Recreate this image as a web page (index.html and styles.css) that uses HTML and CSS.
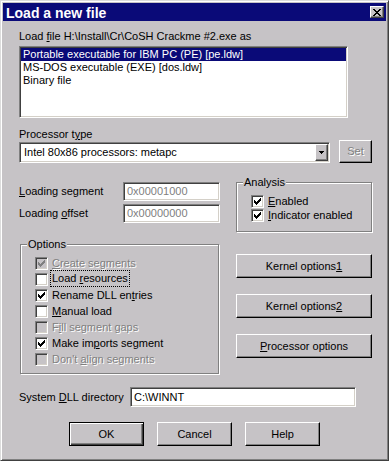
FILE: index.html
```html
<!DOCTYPE html>
<html>
<head>
<meta charset="utf-8">
<title>Load a new file</title>
<link rel="stylesheet" href="styles.css">
</head>
<body>
<div class="window">
  <div class="titlebar">
    <span class="title">Load a new file</span>
    <span class="close"><svg width="8" height="7" viewBox="0 0 8 7"><path d="M0 0h2v1h-2zM6 0h2v1h-2zM1 1h2v1h-2zM5 1h2v1h-2zM2 2h4v1h-4zM3 3h2v1h-2zM2 4h4v1h-4zM1 5h2v1h-2zM5 5h2v1h-2zM0 6h2v1h-2zM6 6h2v1h-2z" fill="#000"/></svg></span>
  </div>
  <div class="client">
    <div class="top-label">Load <u>f</u>ile H:\Install\Cr\CoSH Crackme #2.exe as</div>
    <div class="listbox">
      <div class="item sel">Portable executable for IBM PC (PE) [pe.ldw]</div>
      <div class="item">MS-DOS executable (EXE) [dos.ldw]</div>
      <div class="item">Binary file</div>
    </div>
    <div class="proc-label">Processor t<u>y</u>pe</div>
    <div class="proc-row">
      <div class="combo">
        <span class="combo-text">Intel 80x86 processors: metapc</span>
        <span class="drop"><svg width="5" height="3" viewBox="0 0 5 3"><path d="M0 0h5v1h-5zM1 1h3v1h-3zM2 2h1v1h-1z" fill="#000"/></svg></span>
      </div>
      <div class="btn set disabled">Set</div>
    </div>
    <div class="mid-row">
      <div class="loading">
        <div class="field-row"><span><u>L</u>oading segment</span><div class="edit small">0x00001000</div></div>
        <div class="field-row"><span>Loading <u>o</u>ffset</span><div class="edit small">0x00000000</div></div>
      </div>
      <fieldset class="group analysis">
        <legend>Analysis</legend>
        <div class="chk"><span class="cb"><svg width="13" height="13" viewBox="0 0 13 13"><path class="tick" d="M9 3h1v1h-1zM8 4h2v1h-2zM3 5h1v1h-1zM7 5h3v1h-3zM3 6h2v1h-2zM6 6h3v1h-3zM3 7h5v1h-5zM4 8h3v1h-3zM5 9h1v1h-1z"/></svg></span><span class="lbl"><u>E</u>nabled</span></div>
        <div class="chk"><span class="cb"><svg width="13" height="13" viewBox="0 0 13 13"><path class="tick" d="M9 3h1v1h-1zM8 4h2v1h-2zM3 5h1v1h-1zM7 5h3v1h-3zM3 6h2v1h-2zM6 6h3v1h-3zM3 7h5v1h-5zM4 8h3v1h-3zM5 9h1v1h-1z"/></svg></span><span class="lbl"><u>I</u>ndicator enabled</span></div>
      </fieldset>
    </div>
    <div class="opt-row">
      <fieldset class="group options">
        <legend>Options</legend>
        <div class="chk row16 disabled"><span class="cb"><svg width="13" height="13" viewBox="0 0 13 13"><path class="tick" d="M9 3h1v1h-1zM8 4h2v1h-2zM3 5h1v1h-1zM7 5h3v1h-3zM3 6h2v1h-2zM6 6h3v1h-3zM3 7h5v1h-5zM4 8h3v1h-3zM5 9h1v1h-1z"/></svg></span><span class="lbl"><u>C</u>reate segments</span></div>
        <div class="chk row16"><span class="cb"></span><span class="lbl focus">Load <u>r</u>esources</span></div>
        <div class="chk row16"><span class="cb"><svg width="13" height="13" viewBox="0 0 13 13"><path class="tick" d="M9 3h1v1h-1zM8 4h2v1h-2zM3 5h1v1h-1zM7 5h3v1h-3zM3 6h2v1h-2zM6 6h3v1h-3zM3 7h5v1h-5zM4 8h3v1h-3zM5 9h1v1h-1z"/></svg></span><span class="lbl">Rename DLL en<u>t</u>ries</span></div>
        <div class="chk row16"><span class="cb"></span><span class="lbl"><u>M</u>anual load</span></div>
        <div class="chk row16 disabled"><span class="cb"></span><span class="lbl">F<u>i</u>ll segment gaps</span></div>
        <div class="chk row16"><span class="cb"><svg width="13" height="13" viewBox="0 0 13 13"><path class="tick" d="M9 3h1v1h-1zM8 4h2v1h-2zM3 5h1v1h-1zM7 5h3v1h-3zM3 6h2v1h-2zM6 6h3v1h-3zM3 7h5v1h-5zM4 8h3v1h-3zM5 9h1v1h-1z"/></svg></span><span class="lbl">Make im<u>p</u>orts segment</span></div>
        <div class="chk row16 disabled"><span class="cb"></span><span class="lbl">Don't <u>a</u>lign segments</span></div>
      </fieldset>
      <div class="side-buttons">
        <div class="btn wide">Kernel options<u>1</u></div>
        <div class="btn wide">Kernel options<u>2</u></div>
        <div class="btn wide"><u>P</u>rocessor options</div>
      </div>
    </div>
    <div class="dll-row">
      <span>System <u>D</u>LL directory</span>
      <div class="edit dll">C:\WINNT</div>
    </div>
    <div class="bottom-buttons">
      <div class="btn dlg default">OK</div>
      <div class="btn dlg">Cancel</div>
      <div class="btn dlg">Help</div>
    </div>
  </div>
</div>
</body>
</html>
```
FILE: styles.css
```css
* { box-sizing: border-box; }
html, body { margin: 0; padding: 0; }
body {
  font-family: "Liberation Sans", Arial, sans-serif;
  font-size: 11px;
  line-height: 13px;
  color: #000;
  background: #c6c3c6;
}
u { text-decoration: underline; text-underline-offset: 1px; }

.window {
  width: 389px;
  height: 461px;
  border: 1px solid;
  border-color: #dcdcdc #404040 #404040 #dcdcdc;
  box-shadow: inset 1px 1px 0 #fff, inset -1px -1px 0 #808080;
  padding: 2px;
  background: #c6c3c6;
  display: flex;
  flex-direction: column;
}

.titlebar {
  height: 18px;
  flex-shrink: 0;
  background: #0a0a78;
  display: flex;
  align-items: center;
  justify-content: space-between;
  padding: 0 2px 0 3px;
}
.title {
  color: #fff;
  font-weight: bold;
  font-size: 14px;
  line-height: 18px;
  padding-top: 1px;
}
.close {
  width: 14px;
  height: 12px;
  background: #c6c3c6;
  border: 1px solid;
  border-color: #fff #404040 #404040 #fff;
  box-shadow: inset -1px -1px 0 #808080;
  display: flex;
  align-items: center;
  justify-content: center;
}
.close svg, .drop svg, .cb svg { display: block; shape-rendering: crispEdges; }

.client {
  padding: 9px 16px 0 16px;
  display: flex;
  flex-direction: column;
}

.sunken {
}
.listbox, .combo, .edit {
  background: #fff;
  border: 1px solid;
  border-color: #808080 #fff #fff #808080;
  box-shadow: inset 1px 1px 0 #404040, inset -1px -1px 0 #d4d0c8;
}

.top-label { height: 13px; }
.listbox {
  margin-top: 3px;
  width: 329px;
  height: 72px;
  padding: 1px;
  flex-shrink: 0;
}
.item { height: 13px; line-height: 13px; padding-left: 2px; white-space: nowrap; }
.item.sel { background: #0a0a78; color: #fff; }

.proc-label { margin-top: 10px; line-height: 12px; height: 12px; }
.proc-row { display: flex; align-items: flex-start; gap: 9px; width: 353px; flex-shrink: 0; }
.combo {
  margin-top: 2px;
  width: 311px;
  height: 21px;
  flex-shrink: 0;
  display: flex;
  align-items: center;
  justify-content: space-between;
  padding: 1px 1px 1px 4px;
}
.drop {
  width: 13px;
  height: 17px;
  background: #c6c3c6;
  border: 1px solid;
  border-color: #fff #404040 #404040 #fff;
  box-shadow: inset -1px -1px 0 #808080;
  display: flex;
  align-items: center;
  justify-content: center;
}

.btn {
  background: #c6c3c6;
  border: 1px solid;
  border-color: #fff #000 #000 #fff;
  box-shadow: inset -1px -1px 0 #808080;
  display: flex;
  align-items: center;
  justify-content: center;
  flex-shrink: 0;
  white-space: nowrap;
}
.btn.disabled, .disabled .lbl { color: #808080; text-shadow: 1px 1px 0 #fff; }
.set { width: 33px; height: 23px; }

.mid-row { margin-top: 13px; display: flex; gap: 16px; width: 353px; flex-shrink: 0; align-items: flex-start; }
.loading { width: 201px; padding-top: 6px; display: flex; flex-direction: column; gap: 3px; flex-shrink: 0; }
.field-row { display: flex; justify-content: space-between; align-items: center; height: 19px; }
.edit { padding: 0 3px; line-height: 17px; white-space: nowrap; }
.edit.small { width: 97px; height: 19px; color: #808080; }

.group {
  margin: 0;
  min-width: 0;
  border: 1px solid #808080;
  box-shadow: inset 1px 1px 0 #fff, 1px 1px 0 #fff;
  flex-shrink: 0;
}
.group legend {
  padding: 0 1px;
  margin-left: -8px;
  line-height: 13px;
  background: #c6c3c6;
}
.analysis { width: 136px; padding: 5px 0 9px 14px; }
.chk { display: flex; align-items: center; height: 14px; }
.chk.row16 { height: 16px; align-items: flex-start; }
.row16 .cb { margin-top: 2px; }
.row16 .lbl { line-height: 16px; }
.cb {
  width: 13px;
  height: 13px;
  flex-shrink: 0;
  background: #fff;
  border: 1px solid;
  border-color: #808080 #fff #fff #808080;
  box-shadow: inset 1px 1px 0 #404040, inset -1px -1px 0 #d4d0c8;
}
.cb svg { margin: -1px; }
.tick { fill: #000; }
.disabled .cb { background: #c6c3c6; }
.disabled .tick { fill: #808080; }
.lbl { margin-left: 4px; white-space: nowrap; }
.focus { outline: 1px dotted #000; padding: 0 1px; margin-left: 3px; line-height: 15px !important; margin-top: 0; height: 15px; }

.opt-row { margin-top: 6px; display: flex; gap: 17px; width: 353px; flex-shrink: 0; align-items: flex-start; }
.options { width: 199px; padding: 4px 0 6px 14px; margin-left: 1px; }
.side-buttons { width: 136px; padding-top: 16px; display: flex; flex-direction: column; gap: 16px; }
.btn.wide { width: 136px; height: 24px; }

.dll-row { margin-top: 13px; display: flex; align-items: center; justify-content: space-between; width: 337px; height: 20px; flex-shrink: 0; }
.edit.dll { width: 226px; height: 20px; line-height: 18px; }

.bottom-buttons { margin-top: 15px; display: flex; justify-content: center; gap: 13px; }
.btn.dlg { width: 75px; height: 24px; }
.btn.default {
  border: 1px solid #000;
  box-shadow: inset 1px 1px 0 #fff, inset -1px -1px 0 #404040, inset -2px -2px 0 #808080;
}
```
